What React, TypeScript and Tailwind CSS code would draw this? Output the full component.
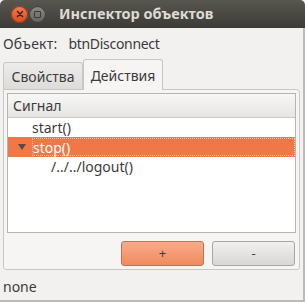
import React from 'react';

const font = { fontFamily: '"Noto Sans", "DejaVu Sans", sans-serif' };

function TitleBar() {
  return (
    <div className="flex h-[28px] items-center bg-gradient-to-b from-[#57564f] to-[#3c3b37] pl-[11px] rounded-t-[5px]">
      <div className="flex h-[17px] w-[17px] items-center justify-center rounded-full bg-gradient-to-b from-[#f57d4b] to-[#d9491a] shadow-[inset_0_0_0_1px_#8a3a1a]">
        <svg width="8" height="8" viewBox="0 0 8 8">
          <path d="M1.5 1.5 L6.5 6.5 M6.5 1.5 L1.5 6.5" stroke="#3a2520" strokeWidth="1.6" strokeLinecap="round" />
        </svg>
      </div>
      <div className="ml-[1px] flex h-[17px] w-[17px] items-center justify-center rounded-full bg-gradient-to-b from-[#8c8b86] to-[#64635e] shadow-[inset_0_0_0_1px_#3a3935]">
        <div className="h-[7px] w-[7px] border-[1.5px] border-[#3a3935] rounded-[1px]" />
      </div>
      <div className="ml-[13px] text-[14.5px] font-bold text-[#dfdbd2]">Инспектор объектов</div>
    </div>
  );
}

function Row({ label, indent, selected, arrow }: { label: string; indent: number; selected?: boolean; arrow?: boolean }) {
  return (
    <div
      className={
        selected
          ? 'relative flex h-[20px] items-center bg-[#f07746] text-white'
          : 'relative flex h-[19px] items-center text-[#3c3c3c]'
      }
    >
      {arrow && (
        <svg className="absolute left-[10px] top-[7px]" width="8" height="7" viewBox="0 0 8 7">
          <path d="M0 0 H8 L4 6 Z" fill="#5a4a42" />
        </svg>
      )}
      <span
        style={{ marginLeft: indent }}
        className={selected ? 'flex-1 h-[18px] leading-[18px] border border-dotted border-[#f9c6ae] -ml-[1px]' : ''}
      >
        {label}
      </span>
    </div>
  );
}

export default function App() {
  return (
    <div style={font} className="h-[302px] w-[305px] bg-[#f2f1f0] text-[14px] text-[#3c3c3c]">
      <TitleBar />
      <div className="flex h-[274px] flex-col border-r-2 border-b-2 border-[#bdbbb7]">
        <div className="flex h-[32px] items-center pl-[3px]">
          <span className="tracking-[0.2px]">Объект:</span>
          <span className="ml-[11px] tracking-[-0.3px]">btnDisconnect</span>
        </div>
        <div className="flex items-end pl-[3px]">
          <div className="flex h-[27px] w-[80px] items-center justify-center rounded-t-[3px] border border-b-0 border-[#c9c7c3] bg-gradient-to-b from-[#edecea] to-[#dedcd9]">
            Свойства
          </div>
          <div className="relative z-10 -mb-[1px] flex h-[31px] w-[80px] items-center justify-center rounded-t-[3px] border border-b-0 border-[#c9c7c3] bg-[#f6f5f4]">
            Действия
          </div>
        </div>
        <div className="mx-[3px] flex h-[183px] flex-col rounded-b-[3px] rounded-tr-[3px] border border-[#c9c7c3] bg-[#f6f5f4] p-[3px]">
          <div className="flex h-[140px] flex-col border border-[#b6b4b0] bg-white">
            <div className="flex h-[24px] items-center border-b border-[#c9c7c3] bg-gradient-to-b from-[#f7f7f6] to-[#e6e5e3] pl-[5px]">
              Сигнал
            </div>
            <Row label="start()" indent={24} />
            <Row label="stop()" indent={24} selected arrow />
            <Row label="/../../logout()" indent={43} />
          </div>
          <div className="mt-[8px] flex justify-end gap-[8px] pr-[1px]">
            <button className="flex h-[25px] w-[83px] items-center justify-center rounded-[3px] border border-[#b5775c] bg-gradient-to-b from-[#f9ab88] to-[#ef8b5f] text-[13px] text-[#3c3c3c]">
              +
            </button>
            <button className="flex h-[25px] w-[83px] items-center justify-center rounded-[3px] border border-[#a8a6a2] bg-gradient-to-b from-[#f1f0ef] to-[#d8d7d5] text-[13px] text-[#3c3c3c]">
              -
            </button>
          </div>
        </div>
        <div className="flex h-[30px] items-center pl-[3px] pt-[2px]">none</div>
      </div>
    </div>
  );
}
